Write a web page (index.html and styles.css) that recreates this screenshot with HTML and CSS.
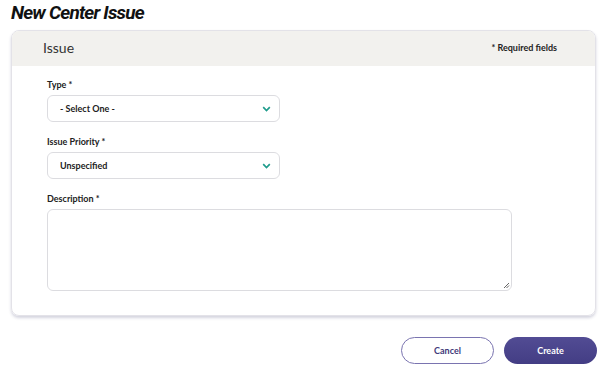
FILE: index.html
```html
<!DOCTYPE html>
<html lang="en">
<head>
  <meta charset="UTF-8">
  <title>New Center Issue</title>
  <link rel="stylesheet" href="styles.css">
</head>
<body>
  <h1 class="page-title">New Center Issue</h1>

  <!-- form card -->
  <div class="card">
    <div class="card-head">
      <span class="card-title">Issue</span>
      <span class="required-note">* Required fields</span>
    </div>
    <div class="card-body">
      <div class="field">
        <label class="field-label">Type *</label>
        <div class="select">
          <span>- Select One -</span>
          <svg class="chev" width="9" height="6" viewBox="0 0 9 6"><path d="M1.2 1.2 L4.5 4.5 L7.8 1.2" fill="none" stroke="#1f9c8c" stroke-width="1.7"/></svg>
        </div>
      </div>
      <div class="field">
        <label class="field-label">Issue Priority *</label>
        <div class="select">
          <span>Unspecified</span>
          <svg class="chev" width="9" height="6" viewBox="0 0 9 6"><path d="M1.2 1.2 L4.5 4.5 L7.8 1.2" fill="none" stroke="#1f9c8c" stroke-width="1.7"/></svg>
        </div>
      </div>
      <div class="field">
        <label class="field-label">Description *</label>
        <div class="textarea">
          <svg class="grip" width="7" height="7" viewBox="0 0 7 7"><path d="M6 1 L1 6 M6 3.5 L3.5 6" stroke="#666" stroke-width="1"/></svg>
        </div>
      </div>
    </div>
  </div>

  <div class="actions">
    <button class="btn btn-cancel">Cancel</button>
    <button class="btn btn-create">Create</button>
  </div>
</body>
</html>
```

FILE: styles.css
```css
body {
  margin: 0;
  padding: 0 11px 0 11px;
  background: #fff;
  color: #222;
  font-family: Lato, "Open Sans", sans-serif;
}

.page-title {
  margin: 0;
  height: 30px;
  padding-top: 1px;
  box-sizing: border-box;
  font-family: Roboto, "Liberation Sans", sans-serif;
  font-style: italic;
  font-weight: 700;
  font-size: 19px;
  line-height: 24px;
  color: #111;
  letter-spacing: -0.8px;
}

/* ===== card ===== */
.card {
  width: 583px;
  border: 1px solid #e3e2e8;
  border-radius: 8px;
  box-shadow: 0 2px 3px rgba(60, 60, 110, 0.22);
  overflow: hidden;
}

.card-head {
  display: flex;
  justify-content: space-between;
  align-items: center;
  height: 35px;
  padding: 0 38px 0 31px;
  background: #f2f1ee;
}
.card-title {
  font-size: 14px;
  color: #333;
  padding-bottom: 2px;
}
.required-note {
  font-size: 9px;
  font-weight: 700;
  color: #222;
  padding-bottom: 3px;
}

.card-body {
  display: flex;
  flex-direction: column;
  gap: 14px;
  padding: 13px 0 24px 35px;
}

.field {
  display: flex;
  flex-direction: column;
  gap: 4px;
}
.field-label {
  font-size: 9px;
  font-weight: 700;
  color: #222;
  line-height: 12px;
}

.select {
  display: flex;
  justify-content: space-between;
  align-items: center;
  width: 233px;
  height: 27px;
  box-sizing: border-box;
  padding: 0 8px 0 12px;
  border: 1px solid #dcdce0;
  border-radius: 6px;
  font-size: 9px;
  font-weight: 700;
  color: #222;
}

.textarea {
  position: relative;
  width: 465px;
  height: 82px;
  box-sizing: border-box;
  border: 1px solid #dcdce0;
  border-radius: 6px;
}
.grip {
  position: absolute;
  right: 1px;
  bottom: 1px;
}

/* ===== buttons ===== */
.actions {
  display: flex;
  justify-content: flex-end;
  gap: 10px;
  width: 586px;
  margin-top: 21px;
}
.btn {
  width: 93px;
  height: 27px;
  border-radius: 14px;
  font-family: Lato, "Open Sans", sans-serif;
  font-size: 9px;
  font-weight: 700;
  cursor: pointer;
}
.btn-cancel {
  background: #fff;
  border: 1px solid #7a74b0;
  color: #3f3a7a;
}
.btn-create {
  background: linear-gradient(#524c94, #433d84);
  border: none;
  color: #fff;
}
```
